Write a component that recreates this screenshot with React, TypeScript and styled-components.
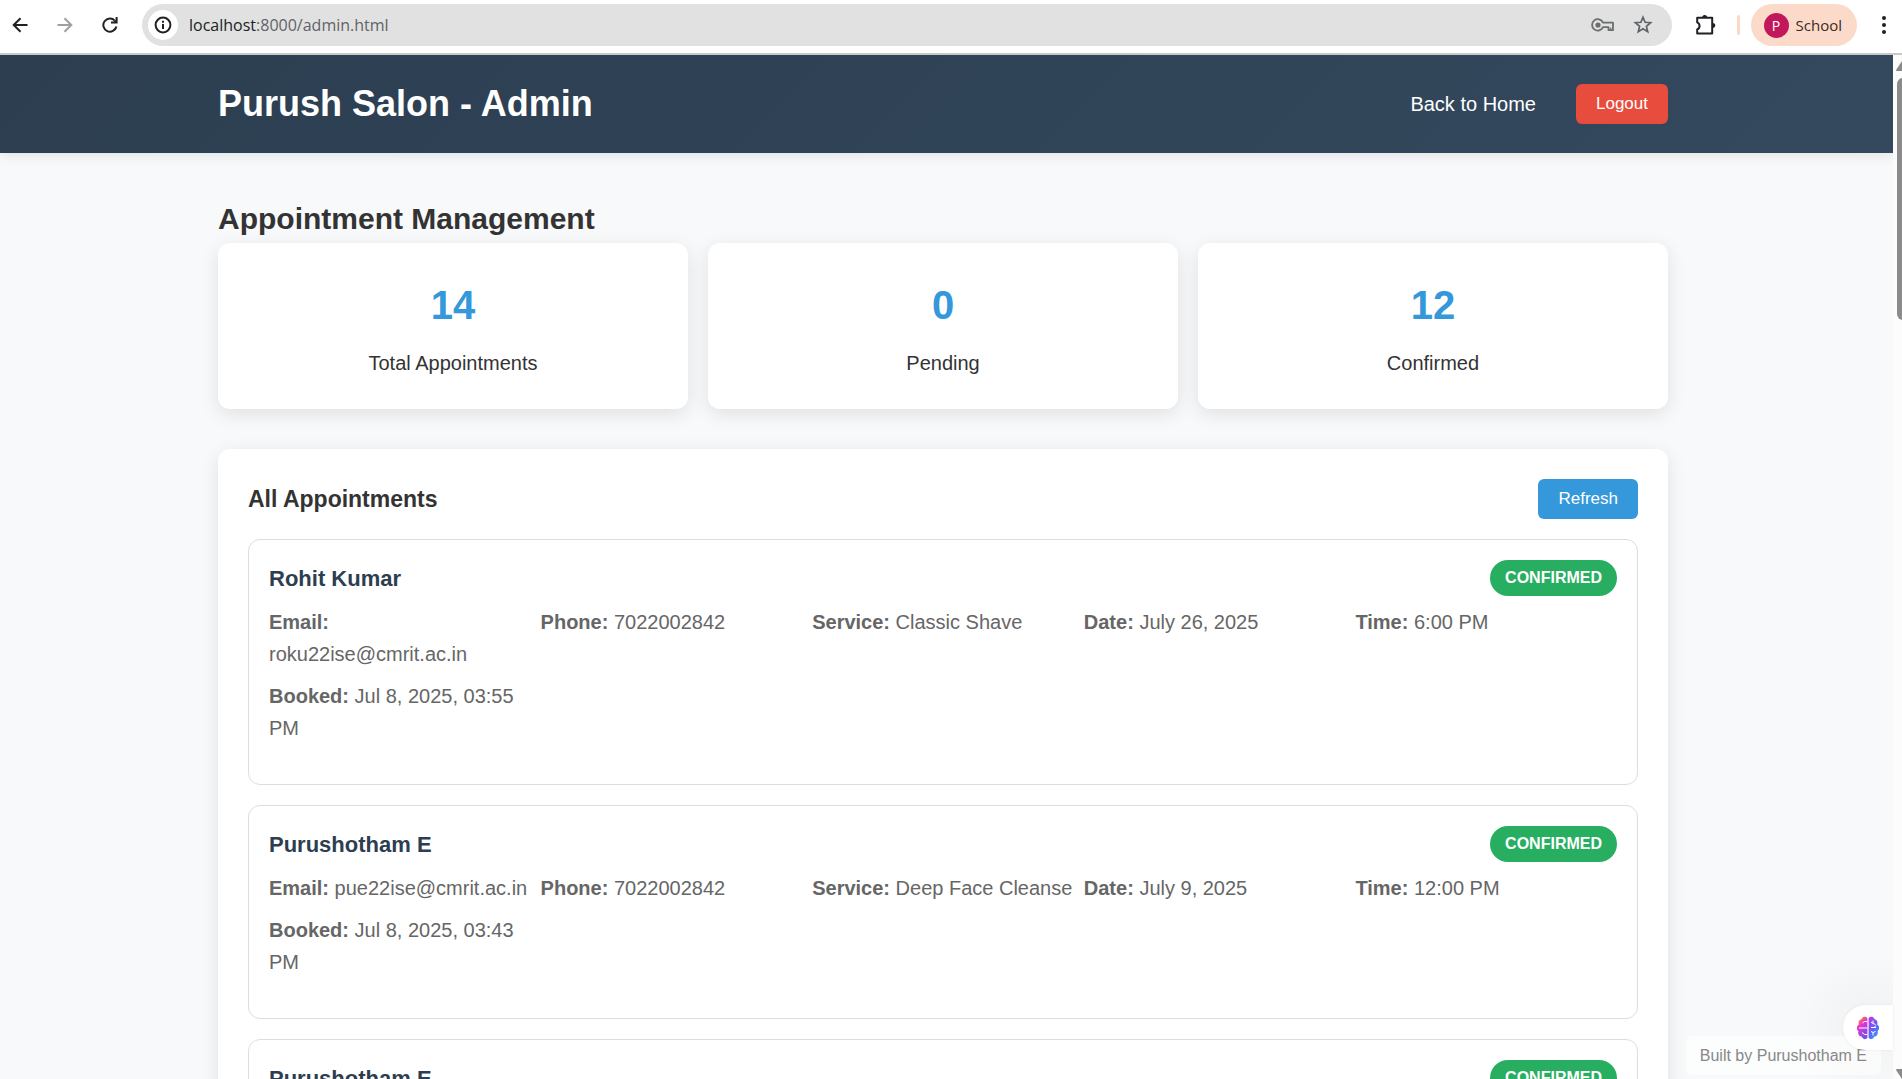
import React from 'react';
import styled, { createGlobalStyle } from 'styled-components';

const GlobalStyle = createGlobalStyle`
  *, *::before, *::after { box-sizing: border-box; margin: 0; padding: 0; }
  body {
    font-family: Arial, "Liberation Sans", sans-serif;
    font-size: 20px;
    line-height: 32px;
    color: #333;
    background: #f8f9fa;
  }
`;

const uiFont = '"Segoe UI", "Open Sans", sans-serif';

const Shell = styled.div`
  display: flex;
  flex-direction: column;
  height: 100vh;
  overflow: hidden;
`;

/* ---------- browser bar ---------- */

const Toolbar = styled.div`
  display: flex;
  align-items: center;
  flex: none;
  height: 55px;
  padding: 0 6px 3px 8px;
  background: #fff;
  border-bottom: 2px solid #c8cac9;
  font-family: ${uiFont};
`;

const NavIcons = styled.div`
  display: flex;
  gap: 21px;
  margin-right: 20px;
`;

const IconButton = styled.button<{ $color?: string }>`
  display: flex;
  align-items: center;
  justify-content: center;
  flex: none;
  width: 24px;
  height: 24px;
  border: 0;
  background: none;
  color: ${(p) => p.$color ?? '#202124'};
`;

const AddressBar = styled.div`
  display: flex;
  align-items: center;
  flex: 1;
  height: 42px;
  padding: 0 17px 0 6px;
  gap: 16px;
  border-radius: 21px;
  background: #e1e1e1;
`;

const SiteInfo = styled.button`
  display: flex;
  align-items: center;
  justify-content: center;
  flex: none;
  width: 30px;
  height: 30px;
  border: 0;
  border-radius: 50%;
  background: #fff;
  color: #202124;
`;

const Url = styled.div`
  flex: 1;
  margin-left: -5px;
  font-size: 16px;
  line-height: 24px;
  color: #5f6368;

  span { color: #202124; }
`;

const ToolbarEnd = styled.div`
  display: flex;
  align-items: center;
  margin-left: 22px;
`;

const Divider = styled.div`
  width: 3px;
  height: 20px;
  margin: 0 11px 0 19px;
  border-radius: 2px;
  background: #fcd9c6;
`;

const Profile = styled.button`
  display: flex;
  align-items: center;
  gap: 7px;
  height: 42px;
  margin-right: 15px;
  padding: 0 15px 0 13px;
  border: 0;
  border-radius: 21px;
  background: #fcdaca;
  color: #3a2a22;
  font: 15px/20px ${uiFont};
`;

const Avatar = styled.span`
  width: 25px;
  height: 25px;
  border-radius: 50%;
  background: #c2185b;
  color: #fff;
  font-size: 14px;
  line-height: 25px;
  text-align: center;
`;

/* ---------- page ---------- */

const Viewport = styled.div`
  position: relative;
  display: flex;
  flex: 1;
  min-height: 0;
`;

const Page = styled.div`
  flex: 1;
  min-width: 0;
  overflow: hidden;
`;

const Container = styled.div`
  max-width: 1450px;
  margin: 0 auto;
`;

const Header = styled.header`
  padding: 20px 7px 20px 0;
  background: linear-gradient(135deg, #2c3e50, #34495e);
  box-shadow: 0 2px 12px rgba(0, 0, 0, 0.1);
`;

const HeaderRow = styled(Container)`
  display: flex;
  align-items: center;
  justify-content: space-between;
`;

const Brand = styled.h1`
  color: #fff;
  font-size: 36px;
  line-height: 58px;
`;

const Nav = styled.nav`
  display: flex;
  align-items: center;
  gap: 40px;
`;

const NavLink = styled.a`
  color: #fff;
  text-decoration: none;
`;

const Button = styled.button<{ $tone: 'danger' | 'primary' }>`
  height: 40px;
  padding: 0 20px;
  border: 0;
  border-radius: 6px;
  background: ${(p) => (p.$tone === 'danger' ? '#e74c3c' : '#3498db')};
  color: #fff;
  font: 17px/20px Arial, "Liberation Sans", sans-serif;
`;

const Main = styled.main`
  padding: 42px 7px 40px 0;
`;

const PageTitle = styled.h2`
  font-size: 30px;
  line-height: 48px;
`;

const Stats = styled.section`
  display: grid;
  grid-template-columns: repeat(3, 1fr);
  gap: 20px;
  margin-bottom: 40px;
`;

const surface = `
  padding: 30px;
  border-radius: 12px;
  background: #fff;
  box-shadow: 0 5px 19px rgba(0, 0, 0, 0.1);
`;

const StatCard = styled.div`
  ${surface}
  display: flex;
  flex-direction: column;
  gap: 10px;
  text-align: center;
`;

const StatValue = styled.strong`
  color: #3498db;
  font-size: 40px;
  line-height: 64px;
`;

const Panel = styled.section`
  ${surface}
`;

const PanelHeader = styled.div`
  display: flex;
  align-items: center;
  justify-content: space-between;
  margin-bottom: 20px;
`;

const PanelTitle = styled.h3`
  font-size: 23px;
  line-height: 36px;
`;

const List = styled.ul`
  display: grid;
  gap: 20px;
  list-style: none;
`;

const Card = styled.li`
  padding: 20px;
  border: 1px solid #ddd;
  border-radius: 12px;
`;

const CardHeader = styled.div`
  display: flex;
  align-items: center;
  justify-content: space-between;
  margin-bottom: 10px;
`;

const Customer = styled.h4`
  color: #2c3e50;
  font-size: 22px;
  line-height: 35px;
`;

const Status = styled.span`
  padding: 5px 15px;
  border-radius: 18px;
  background: #27ae60;
  color: #fff;
  font-size: 16px;
  font-weight: bold;
  line-height: 26px;
  text-transform: uppercase;
`;

const Details = styled.div`
  display: grid;
  grid-template-columns: repeat(auto-fit, minmax(250px, 1fr));
  gap: 10px;
  margin-bottom: 20px;
  color: #666;
`;

/* ---------- overlays ---------- */

const Scrollbar = styled.div`
  display: flex;
  flex-direction: column;
  align-items: flex-start;
  flex: none;
  width: 9px;
  padding: 6px 0 0 3px;
  overflow: hidden;
  background: #fcfcfc;

  svg { flex: none; }
`;

const Thumb = styled.div`
  flex: none;
  width: 12px;
  height: 242px;
  margin: 7px 0 auto 1px;
  border-radius: 6px;
  background: #8b8b8b;
`;

const Credit = styled.div`
  position: absolute;
  right: 21px;
  bottom: 4px;
  padding: 6px 14px;
  border-radius: 6px;
  background: rgba(255, 255, 255, 0.6);
  color: #888;
  font-size: 16px;
  line-height: 27px;
`;

const Assistant = styled.button`
  position: absolute;
  right: 9px;
  bottom: 29px;
  display: flex;
  align-items: center;
  width: 50px;
  height: 45px;
  padding-left: 13px;
  border: 0;
  border-radius: 23px 0 0 23px;
  background: #fff;
  box-shadow: 0 0 3px rgba(0, 0, 0, 0.08);
`;

const AssistantGlow = styled.div`
  position: absolute;
  right: 9px;
  bottom: 0;
  width: 110px;
  height: 130px;
  background: radial-gradient(circle at 85px 78px, rgba(0, 0, 0, 0.03), transparent 76px);
  pointer-events: none;
`;

/* ---------- icons ---------- */

const Arrow = ({ flip }: { flip?: boolean }) => (
  <svg width="16" height="16" viewBox="0 0 16 16" fill="none" stroke="currentColor" strokeWidth="2" transform={flip ? 'rotate(180)' : undefined}>
    <path d="M15.5 8H2M8.5 1.2L1.700 8l6.800 6.800" />
  </svg>
);

const Reload = () => (
  <svg width="16" height="16" viewBox="0 0 16 16" fill="none" stroke="currentColor" strokeWidth="2">
    <path d="M14.400 9.500A6.600 6.600 0 1 1 12.800 3.600" />
    <path d="M15.600 0v6.600H9v-2h3l1.600-1.600V0Z" fill="currentColor" stroke="none" />
  </svg>
);

const Info = () => (
  <svg width="18" height="18" viewBox="0 0 18 18" fill="none" stroke="currentColor" strokeWidth="2">
    <circle cx="9" cy="9" r="7.400" />
    <path d="M9 8v5M9 4.700v2" />
  </svg>
);

const Key = () => (
  <svg width="24" height="14" viewBox="0 0 24 14" fill="none" stroke="currentColor" strokeWidth="1.8">
    <path d="M12 4.600A5.700 5.700 0 1 0 12 9.200H17.500V12.200H22V4.600Z" strokeLinejoin="round" />
    <path d="M19.700 9.500v3" strokeWidth="1.200" />
    <circle cx="7" cy="7" r="2.600" fill="currentColor" stroke="none" />
  </svg>
);

const Star = () => (
  <svg width="20" height="20" viewBox="0 0 20 20" fill="none" stroke="currentColor" strokeWidth="1.7">
    <path d="M10 2.2l2.1 5.1 5.5.4-4.2 3.6 1.3 5.4L10 13.8l-4.700 2.900 1.300-5.400-4.200-3.600 5.500-.4Z" />
  </svg>
);

const Puzzle = () => (
  <svg width="22" height="22" viewBox="0 0 22 22" fill="none" stroke="currentColor" strokeWidth="2" strokeLinejoin="round">
    <path d="M2.200 3.800h15v15.800h-15v-4.200a3.800 3.800 0 0 0 0-7Z" />
    <path d="M7.200 3.400a2.500 2.500 0 0 1 5 0ZM17.800 9a2.500 2.500 0 0 1 0 5Z" fill="currentColor" stroke="none" />
  </svg>
);

const Dots = () => (
  <svg width="6" height="20" viewBox="0 0 6 20" fill="currentColor">
    <circle cx="3" cy="3" r="2" />
    <circle cx="3" cy="10" r="2" />
    <circle cx="3" cy="17" r="2" />
  </svg>
);

const Brain = () => (
  <svg width="24" height="24" viewBox="0 0 24 24">
    <defs>
      <linearGradient id="brainLeft" x1="0" y1="0" x2="0.5" y2="1">
        <stop offset="0.1" stopColor="#ff9a2e" />
        <stop offset="0.45" stopColor="#e935c8" />
        <stop offset="1" stopColor="#7a4bf0" />
      </linearGradient>
      <linearGradient id="brainRight" x1="0.2" y1="0" x2="0.8" y2="1">
        <stop offset="0" stopColor="#b23df0" />
        <stop offset="0.5" stopColor="#6a5cf6" />
        <stop offset="1" stopColor="#22a5f7" />
      </linearGradient>
    </defs>
    <path fill="url(#brainLeft)" d="M11.4 2.2C9.600-.2 6 .6 5.400 3.200 2.800 3.600 1.800 6.400 3 8.200.4 9.600.2 13.600 2.400 15.200 1.600 18 3.200 20.400 5.600 20.600 6.600 23.400 10 24 11.400 21.800Z" />
    <path fill="url(#brainRight)" d="M12.600 2.200C14.400-.2 18 .6 18.600 3.200 21.200 3.600 22.200 6.400 21 8.200 23.600 9.600 23.800 13.600 21.600 15.200 22.400 18 20.800 20.400 18.400 20.600 17.400 23.400 14 24 12.600 21.800Z" />
    <path fill="none" stroke="#fff" strokeWidth="1" d="M11.400 5.500H8.500L6.500 7M3 12h8.400M11.400 18.500H8.500L6 16.500M15 6l2 1.500M17 4.500v3l2.500 1M15 11.500h5M18 11.500l2-2M15 15.500l2 1v3M17 16.500l2.500-1" />
  </svg>
);

const Triangle = ({ down }: { down?: boolean }) => (
  <svg width="12" height="10" viewBox="0 0 12 10" fill="#8b8b8b">
    <path d={down ? 'M0 1Q0 0 1 0H11Q12 0 12 1L6 10Z' : 'M0 9Q0 10 1 10H11Q12 10 12 9L6 0Z'} />
  </svg>
);

/* ---------- data ---------- */

interface Appointment {
  name: string;
  fields: [string, string][];
}

const stats = [
  { value: 14, label: 'Total Appointments' },
  { value: 0, label: 'Pending' },
  { value: 12, label: 'Confirmed' },
];

const appointments: Appointment[] = [
  {
    name: 'Rohit Kumar',
    fields: [
      ['Email', 'roku22ise@cmrit.ac.in'],
      ['Phone', '7022002842'],
      ['Service', 'Classic Shave'],
      ['Date', 'July 26, 2025'],
      ['Time', '6:00 PM'],
      ['Booked', 'Jul 8, 2025, 03:55 PM'],
    ],
  },
  {
    name: 'Purushotham E',
    fields: [
      ['Email', 'pue22ise@cmrit.ac.in'],
      ['Phone', '7022002842'],
      ['Service', 'Deep Face Cleanse'],
      ['Date', 'July 9, 2025'],
      ['Time', '12:00 PM'],
      ['Booked', 'Jul 8, 2025, 03:43 PM'],
    ],
  },
  { name: 'Purushotham E', fields: [] },
];

export default function App() {
  return (
    <Shell>
      <GlobalStyle />
      <Toolbar>
        <NavIcons>
          <IconButton aria-label="Back"><Arrow /></IconButton>
          <IconButton aria-label="Forward" $color="#a0a0a0"><Arrow flip /></IconButton>
          <IconButton aria-label="Reload"><Reload /></IconButton>
        </NavIcons>
        <AddressBar>
          <SiteInfo aria-label="Site information"><Info /></SiteInfo>
          <Url><span>localhost</span>:8000/admin.html</Url>
          <IconButton aria-label="Passwords" $color="#6b6e70"><Key /></IconButton>
          <IconButton aria-label="Bookmark" $color="#5f6368"><Star /></IconButton>
        </AddressBar>
        <ToolbarEnd>
          <IconButton aria-label="Extensions"><Puzzle /></IconButton>
          <Divider />
          <Profile><Avatar>P</Avatar>School</Profile>
          <IconButton aria-label="Menu"><Dots /></IconButton>
        </ToolbarEnd>
      </Toolbar>

      <Viewport>
        <Page>
          <Header>
            <HeaderRow>
              <Brand>Purush Salon - Admin</Brand>
              <Nav>
                <NavLink href="#home">Back to Home</NavLink>
                <Button $tone="danger">Logout</Button>
              </Nav>
            </HeaderRow>
          </Header>
          <Main>
            <Container>
              <PageTitle>Appointment Management</PageTitle>
              <Stats>
                {stats.map((s) => (
                  <StatCard key={s.label}>
                    <StatValue>{s.value}</StatValue>
                    <span>{s.label}</span>
                  </StatCard>
                ))}
              </Stats>
              <Panel>
                <PanelHeader>
                  <PanelTitle>All Appointments</PanelTitle>
                  <Button $tone="primary">Refresh</Button>
                </PanelHeader>
                <List>
                  {appointments.map((a, i) => (
                    <Card key={i}>
                      <CardHeader>
                        <Customer>{a.name}</Customer>
                        <Status>Confirmed</Status>
                      </CardHeader>
                      <Details>
                        {a.fields.map(([label, value]) => (
                          <p key={label}><strong>{label}:</strong> {value}</p>
                        ))}
                      </Details>
                    </Card>
                  ))}
                </List>
              </Panel>
            </Container>
          </Main>
        </Page>
        <Scrollbar>
          <Triangle />
          <Thumb />
          <Triangle down />
        </Scrollbar>
        <AssistantGlow />
        <Credit>Built by Purushotham E</Credit>
        <Assistant aria-label="Assistant"><Brain /></Assistant>
      </Viewport>
    </Shell>
  );
}
